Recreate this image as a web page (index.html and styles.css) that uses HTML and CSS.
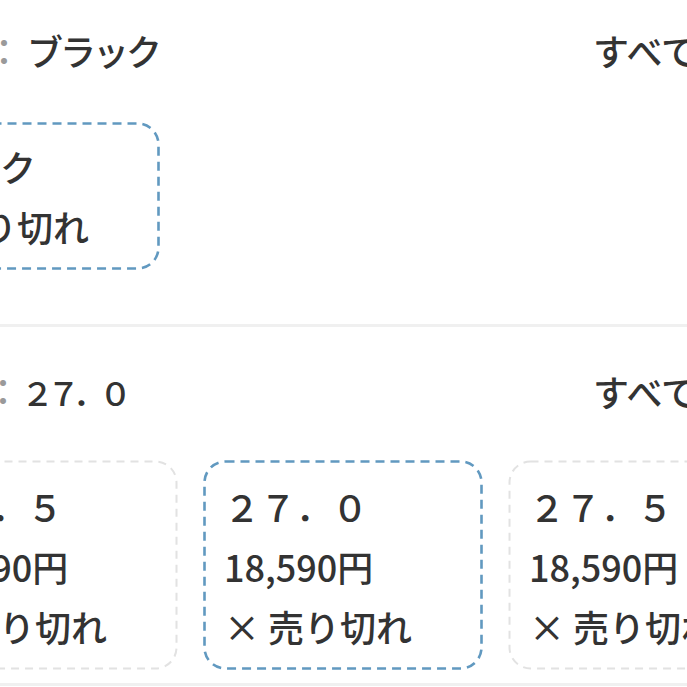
FILE: index.html
```html
<!DOCTYPE html>
<html lang="ja">
<head>
<meta charset="utf-8">
<link rel="stylesheet" href="styles.css">
</head>
<body>
<div class="page">
  <section class="group group-color">
    <div class="head">
      <div class="label"><span class="key">カラー：</span><span class="val kana">ブラック</span></div>
      <div class="more">すべてを見る</div>
    </div>
    <div class="cards cards-color">
      <div class="card short selected">
        <svg class="frame" width="280" height="148"><rect x="1.5" y="1.5" width="277" height="145" rx="21" ry="21"/></svg>
        <div class="line kana">ブラック</div>
        <div class="line">× 売り切れ</div>
      </div>
    </div>
  </section>
  <div class="divider"></div>
  <section class="group group-size">
    <div class="head">
      <div class="label"><span class="key">サイズ：</span><span class="val size-val">２７．０</span></div>
      <div class="more">すべてを見る</div>
    </div>
    <div class="cards cards-size">
      <div class="card">
        <svg class="frame" width="280" height="210"><rect x="1.5" y="1.5" width="277" height="207" rx="21" ry="21"/></svg>
        <div class="line">２６．５</div>
        <div class="line">18,590円</div>
        <div class="line">× 売り切れ</div>
      </div>
      <div class="card selected">
        <svg class="frame" width="280" height="210"><rect x="1.5" y="1.5" width="277" height="207" rx="21" ry="21"/></svg>
        <div class="line">２７．０</div>
        <div class="line">18,590円</div>
        <div class="line">× 売り切れ</div>
      </div>
      <div class="card">
        <svg class="frame" width="280" height="210"><rect x="1.5" y="1.5" width="277" height="207" rx="21" ry="21"/></svg>
        <div class="line">２７．５</div>
        <div class="line">18,590円</div>
        <div class="line">× 売り切れ</div>
      </div>
    </div>
  </section>
  <div class="divider"></div>
</div>
</body>
</html>
```
FILE: styles.css
```css
html, body {
  margin: 0;
  padding: 0;
  background: #ffffff;
  overflow: hidden;
}

body {
  width: 687px;
  height: 687px;
  font-family: "Noto Sans CJK JP", "Noto Sans", sans-serif;
  font-weight: 500;
  color: #333333;
  font-size: 36px;
}

.page {
  width: 900px;
}

.group {
  margin-left: -14px;
}

.group-color {
  padding-top: 30px;
  padding-bottom: 54px;
}

.group-size {
  padding-top: 44px;
  padding-bottom: 13px;
}

.head {
  display: flex;
  align-items: center;
  height: 40px;
  line-height: 40px;
  white-space: nowrap;
}

.label {
  flex: none;
  width: 715px;
  margin-left: -108px;
}

.key {
  color: #9a9a9a;
}

.kana {
  letter-spacing: -3px;
}

.label .kana {
  margin-left: 5px;
}

.size-val {
  font-size: 33px;
  letter-spacing: -7px;
}

.more {
  color: #333333;
}

.cards {
  display: flex;
  gap: 25px;
}

.cards-color {
  margin-top: 52px;
  margin-left: -106px;
}

.cards-size {
  margin-top: 49px;
  margin-left: -88px;
}

.card {
  position: relative;
  flex: none;
  width: 280px;
  height: 210px;
  box-sizing: border-box;
  padding: 16px 21px 14px;
  border-radius: 22px;
  background: #ffffff;
  white-space: nowrap;
}

.card.short {
  height: 148px;
  padding-top: 14px;
}

.frame {
  position: absolute;
  left: 0;
  top: 0;
  pointer-events: none;
}

.frame rect {
  fill: none;
  stroke: #e2e2e2;
  stroke-width: 2;
  stroke-dasharray: 8 6;
}

.card.selected .frame rect {
  stroke: #6199c0;
  stroke-width: 2.6;
  stroke-dasharray: 9 6;
}

.line {
  line-height: 60px;
  height: 60px;
}

.divider {
  height: 3px;
  background: #f0f0f0;
}
```
